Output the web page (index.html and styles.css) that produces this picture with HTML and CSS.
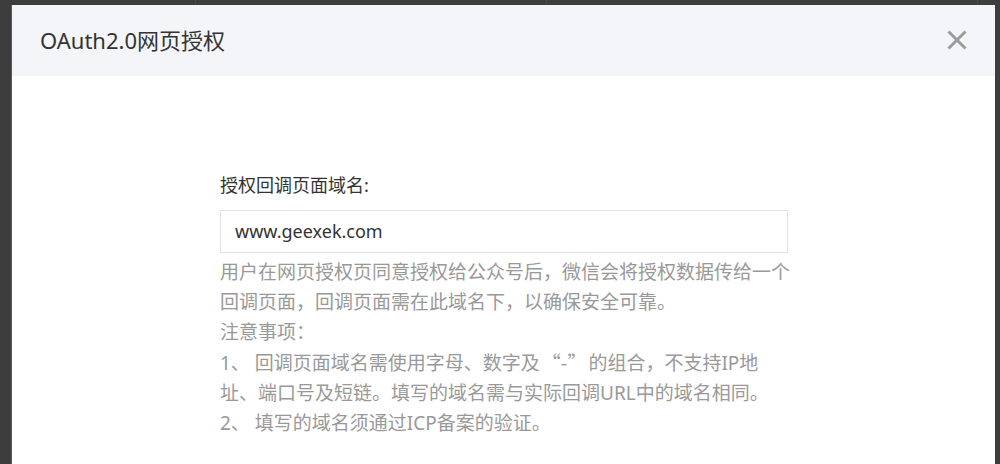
FILE: index.html
```html
<!DOCTYPE html>
<html lang="zh-CN">
<head>
<meta charset="utf-8">
<title>OAuth2.0网页授权</title>
<link rel="stylesheet" href="styles.css">
</head>
<body>
<div class="page">
  <div class="bg-row">
    <span class="bg-cell c1"></span>
    <span class="bg-cell c2"></span>
    <span class="bg-cell c3"></span>
    <span class="bg-cell c4"></span>
  </div>
</div>
<div class="modal">
  <div class="modal-header">
    <h1 class="modal-title">OAuth2.0网页授权</h1>
    <button class="close" aria-label="关闭">
      <svg width="20" height="20" viewBox="0 0 20 20"><path d="M1.5 1.5 L18.5 18.5 M18.5 1.5 L1.5 18.5" stroke="#9b9b9b" stroke-width="3" fill="none"/></svg>
    </button>
  </div>
  <div class="modal-body">
    <div class="form">
      <label class="label">授权回调页面域名:</label>
      <div class="input">www.geexek.com</div>
      <p class="desc">用户在网页授权页同意授权给公众号后，微信会将授权数据传给一个<br>回调页面，回调页面需在此域名下，以确保安全可靠。<br>注意事项：<br>1、 回调页面域名需使用字母、数字及<span class="cjk">“-”</span>的组合，不支持IP地<br>址、端口号及短链。填写的域名需与实际回调URL中的域名相同。<br>2、 填写的域名须通过ICP备案的验证。</p>
    </div>
  </div>
</div>
</body>
</html>
```

FILE: styles.css
```css
html, body {
  margin: 0;
  padding: 0;
  width: 1000px;
  height: 464px;
  overflow: hidden;
  background: #3d3d3d;
  font-family: "Noto Sans", "Noto Sans CJK SC", sans-serif;
}

.page {
  height: 464px;
}

.bg-row {
  display: flex;
  height: 12px;
}

.bg-cell {
  display: block;
  border-right: 1px solid #484848;
}

.c1 { width: 195px; }
.c2 { width: 350px; }
.c3 { width: 430px; }
.c4 { flex: 1; border-right: none; }

.modal {
  position: absolute;
  left: 12px;
  top: 5px;
  width: 983px;
  height: 480px;
  background: #fff;
  box-shadow: -1px 0 0 rgba(255,255,255,0.15);
}

.modal-header {
  height: 71px;
  background: #f4f5f9;
  display: flex;
  align-items: center;
  justify-content: space-between;
  padding: 0 28px 0 28px;
}

.modal-title {
  margin: 0;
  font-size: 22px;
  font-weight: normal;
  color: #333;
  line-height: 30px;
  margin-top: -1px;
}

.close {
  border: none;
  background: none;
  padding: 0;
  width: 20px;
  height: 20px;
  margin-top: -1px;
}

.close svg {
  display: block;
}

.modal-body {
  padding: 96px 0 0 208px;
}

.form {
  width: 600px;
}

.label {
  display: block;
  font-size: 18px;
  line-height: 26px;
  color: #333;
  margin-bottom: 12px;
}

.input {
  box-sizing: border-box;
  width: 568px;
  height: 43px;
  border: 1px solid #e3e3e3;
  padding: 0 14px;
  font-size: 18px;
  line-height: 41px;
  color: #333;
}

.desc {
  margin: 4px 0 0 0;
  font-size: 19px;
  line-height: 30px;
  color: #999;
  white-space: nowrap;
}

.cjk {
  font-family: "Noto Sans CJK SC", sans-serif;
  margin: 0 2px;
}
```
